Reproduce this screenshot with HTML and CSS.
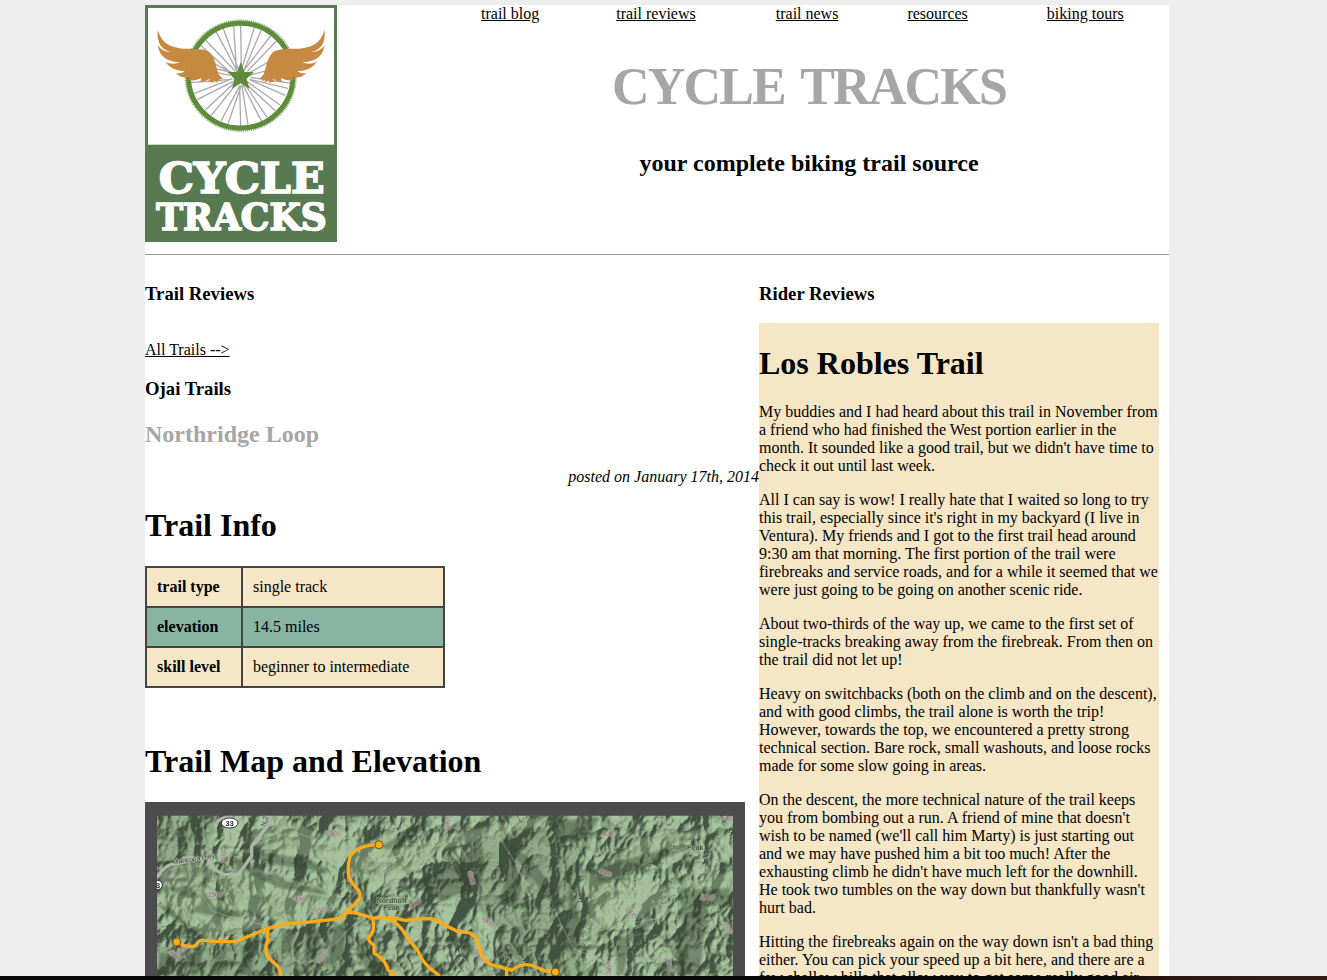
FILE: index.html
```html
<!DOCTYPE html>
<html lang="en">
<head>
<meta charset="utf-8">
<title>Cycle Tracks</title>
<link rel="stylesheet" href="styles.css">
</head>
<body>
<div class="wrapper">
<header class="masthead">
<svg class="logo" viewBox="15 15 576 711" aria-label="Cycle Tracks">
  <rect x="15" y="15" width="576" height="711" fill="#587a51"/>
  <rect x="24" y="24" width="558" height="408" fill="#fff"/>
  <rect x="24" y="432" width="558" height="3" fill="#c9d5c6"/>
  <g stroke="#aaa" stroke-width="4" fill="none">
    <path d="M290 220L281 78M304 200L302 76M306 204L343 82M312 210L364 90M309 215L392 108M322 214L410 122M322 222L430 160M330 226L454 190M296 210L247 78M290 210L228 95M286 214L197 121M276 222L183 137M280 220L160 160M272 216L150 190M270 226L150 200M276 238L150 248M278 236L163 280M280 244L172 299M288 244L196 330M292 248L214 346M300 256L243 363M304 256L264 371M299 260L302 378M306 256L324 375M306 248L365 365M310 246L381 352M312 246L407 333M320 244L420 315M330 240L436 286M328 238L444 265M330 232L456 250"/>
  </g>
  <circle cx="302" cy="227" r="166" fill="none" stroke="#91b078" stroke-width="6" stroke-dasharray="3.2 2.6"/>
  <circle cx="302" cy="227" r="157" fill="none" stroke="#5f8b3d" stroke-width="15"/>
  <path d="M302 187L314 216H342L320 236L328 266L302 250L276 266L283 236L262 216H291Z" fill="#5f8b3d"/>
  <g fill="#c68941">
    <path id="wing" d="M53 90C65 130 90 142 129 146C165 147 194 144 210 158C229 178 228 210 238 226Q244 235 254 238Q244 235 237 239L246 245L231 241L234 249L220 241L222 248Q208 244 201 247Q211 240 208 237Q190 247 177 247Q187 240 182 235Q158 247 141 238Q153 236 151 232Q122 236 108 220Q126 222 135 214Q96 213 76 186Q98 196 121 187Q61 186 53 136Q68 157 93 156Q48 146 53 90Z"/>
    <use href="#wing" transform="matrix(-1 0 0 1 607 0)"/>
  </g>
  <g class="logo-text">
    <text x="56" y="579" font-size="127" textLength="498" lengthAdjust="spacingAndGlyphs">CYCLE</text>
    <text x="49" y="689" font-size="111" textLength="511" lengthAdjust="spacingAndGlyphs">TRACKS</text>
  </g>
</svg>
<div class="banner">
  <nav class="nav"><a>trail blog</a><a>trail reviews</a><a>trail news</a><a>resources</a><a>biking tours</a></nav>
  <h1 class="title">CYCLE TRACKS</h1>
  <h2 class="tagline">your complete biking trail source</h2>
</div>
</header>
<main class="columns">
<section class="main-column">
  <h3 class="section-name">Trail Reviews</h3>
  <a class="all-trails">All Trails --&gt;</a>
  <h3 class="region">Ojai Trails</h3>
  <h2 class="trail-name">Northridge Loop</h2>
  <p class="posted">posted on January 17th, 2014</p>
  <h1 class="heading">Trail Info</h1>
  <table class="info">
    <tr><th>trail type</th><td>single track</td></tr>
    <tr class="alt"><th>elevation</th><td>14.5 miles</td></tr>
    <tr><th>skill level</th><td>beginner to intermediate</td></tr>
  </table>
  <h1 class="heading map-heading">Trail Map and Elevation</h1>
  <svg class="map" viewBox="15 21 1800 522">
    <defs>
      <filter id="relief" x="0" y="0" width="1" height="1" color-interpolation-filters="sRGB">
        <feTurbulence type="turbulence" baseFrequency="0.0065 0.005" numOctaves="4" seed="14"/>
        <feColorMatrix values="0 0 0 0 0  0 0 0 0 0  0 0 0 0 0  -1 0 0 0 1"/>
        <feGaussianBlur stdDeviation="1.5"/>
        <feDiffuseLighting surfaceScale="60" diffuseConstant="1" lighting-color="#fff"><feDistantLight azimuth="215" elevation="38"/></feDiffuseLighting>
        <feComponentTransfer>
          <feFuncR type="table" tableValues=".27 .34 .42 .49 .55 .61 .66"/>
          <feFuncG type="table" tableValues=".33 .41 .50 .58 .65 .72 .77"/>
          <feFuncB type="table" tableValues=".26 .33 .40 .46 .52 .58 .63"/>
        </feComponentTransfer>
      </filter>
      <filter id="soft"><feGaussianBlur stdDeviation="3"/></filter>
      <clipPath id="area"><rect x="51" y="62" width="1728" height="481"/></clipPath>
    </defs>
    <rect x="15" y="21" width="1800" height="522" fill="#4c4c4c"/>
    <g clip-path="url(#area)">
      <rect x="51" y="62" width="1728" height="481" fill="#8ba583" filter="url(#relief)"/>
      <g fill="#a3c197" opacity=".4" filter="url(#soft)">
        <path d="M345 90L440 75L630 150L615 200L430 170L330 150ZM60 220L190 190L190 290L350 365L390 395L190 430L60 320ZM220 240L350 220L600 300L600 350L400 380L260 320Z"/>
        <path d="M620 130L760 165L920 120L1170 70L1250 80L1040 130L880 170L810 230L720 270L630 240ZM1340 240L1500 130L1780 90L1600 155L1500 190L1400 280L1590 270L1780 230L1780 280L1600 300L1500 370L1350 420Z"/>
      </g>
      <g fill="#33432f" opacity=".42" filter="url(#soft)">
        <path d="M340 165L420 180L500 190L570 225L550 235L475 215L400 210L340 190ZM285 195L335 180L305 232L285 225ZM190 205L220 235L190 285L225 335L310 350L285 370L205 360L150 350L182 324ZM325 232L415 240L450 265L550 285L560 300L420 280ZM52 330L90 335L150 395L200 430L170 425L75 350ZM80 280L145 272L180 305L145 310Z"/>
        <path d="M720 155L815 100L855 65L865 90L820 130L745 164ZM810 270L910 220L980 180L1020 130L1038 210L1010 290L950 300L910 320ZM1080 120L1190 210L1280 340L1240 330L1150 220ZM1230 80L1380 65L1330 130L1250 145ZM1350 225L1470 190L1580 160L1690 145L1560 195L1460 240L1380 260ZM1620 285L1770 280L1770 320L1700 330L1680 540L1610 540L1610 430L1630 400ZM1434 440L1515 380L1560 370L1470 440L1450 540L1430 540Z"/>
        <path d="M60 470L110 480L90 540L55 540ZM150 480L190 465L175 540L140 540ZM225 475L265 460L245 540L215 540ZM310 455L345 440L335 540L300 540ZM425 410L470 400L450 470L425 480ZM500 410L545 395L530 490L490 500ZM580 400L620 375L610 480L565 510ZM650 430L700 430L730 530L690 540L650 480ZM800 430L870 480L930 540L880 540ZM920 420L990 430L1010 480L950 460ZM1110 180L1140 250L1130 340L1080 320ZM1290 250L1320 380L1300 500L1280 430Z"/>
      </g>
      <g fill="#3d4f39" opacity=".18" filter="url(#soft)"><path d="M51 62H235L205 150L110 195L51 210ZM51 455L380 425L620 385L640 543H51ZM1000 130L1380 70L1310 240L1340 543H1120L1060 400L990 300Z"/></g>
      <g fill="none" stroke="#aeb4ac" stroke-width="10"><path d="M51 248Q75 205 112 206L205 185L222 222L250 238L294 240L335 182V154L385 90L393 62"/><path d="M225 92Q240 62 278 64" stroke-width="8"/></g>
      <g fill="none" stroke="#b9c5b2" stroke-width="3" opacity=".45"><path d="M340 150L460 110L560 145L630 128M180 290L220 350L270 365L385 393M430 480L500 510L580 450L630 400M1080 130L1130 210L1170 310V430M1330 450L1360 410L1470 385L1560 370L1630 300M700 200L790 180L900 150M1250 360L1300 460L1390 500L1450 540"/></g>
      <g class="contours">
        <text x="560" y="120" transform="rotate(4 560 120)">2500</text><text x="204" y="305">2500</text><text x="455" y="316" transform="rotate(5 455 316)">-3000</text><text x="525" y="357" transform="rotate(-15 525 357)">3500</text><text x="255" y="205" transform="rotate(-88 255 205)">2500</text><text x="540" y="508" transform="rotate(-60 540 508)">3500</text><text x="85" y="475" transform="rotate(35 85 475)">2000</text><text x="117" y="474" transform="rotate(-25 117 474)">1500</text>
        <text x="915" y="64" transform="rotate(85 915 64)">3500</text><text x="635" y="262" transform="rotate(-86 635 262)">3500</text><text x="983" y="230" transform="rotate(75 983 230)">4000</text><text x="812" y="345" transform="rotate(-38 812 345)">4000</text><text x="1022" y="372" transform="rotate(36 1022 372)">4000</text><text x="998" y="472" transform="rotate(45 998 472)">3500</text>
        <text x="1385" y="124">4000'</text><text x="1373" y="232" transform="rotate(20 1373 232)">4500</text><text x="1452" y="342" transform="rotate(43 1452 342)">3000</text><text x="1680" y="314">4500'</text><text x="1745" y="387" transform="rotate(48 1745 387)">4500</text><text x="1397" y="498" transform="rotate(88 1397 498)">2500</text><text x="1577" y="490" transform="rotate(78 1577 490)">3500</text><text x="1740" y="75">5000</text>
      </g>
      <g class="places"><text x="710" y="323" textLength="90">Nordhoff</text><text x="730" y="345">Peak</text><text x="1583" y="165">Chief Peak</text></g>
      <g class="roads"><text x="100" y="208" transform="rotate(-9 100 208)">Maricopa Hwy</text><text x="376" y="95" transform="rotate(-75 376 95)">N 24</text></g>
      <g fill="#fff" stroke="#333" stroke-width="3"><ellipse cx="269" cy="84" rx="25" ry="15"/><ellipse cx="51" cy="270" rx="16" ry="14"/></g>
      <g class="shield"><text x="269" y="92" text-anchor="middle">33</text><text x="48" y="278">3</text></g>
      <g fill="none" stroke="#fdab19" stroke-width="10" stroke-linejoin="round">
        <path d="M110 441L135 453L158 455Q166 454 174 442Q180 434 194 436L230 440L290 439L384 400L440 386L500 382L600 371Q613 365 620 350L650 323Q667 303 655 285L635 262Q616 235 630 185Q650 150 717 149"/>
        <path d="M384 400L382 440Q368 475 398 500Q426 520 421 543M614 353L640 352L695 368L770 370L798 377Q858 366 885 375L950 408L985 413Q1008 418 1016 450Q1025 510 1080 515L1115 526Q1150 498 1188 516L1215 528H1246"/>
        <path d="M698 370Q708 405 685 430Q688 442 702 450V475Q735 490 744 525L770 543M735 370Q775 376 803 430L833 466Q842 495 870 520L900 543M1100 522V543"/>
      </g>
      <g fill="#fbac18" stroke="#6d541b" stroke-width="3"><circle cx="110" cy="441" r="12"/><circle cx="717" cy="149" r="12"/><circle cx="1246" cy="531" r="12"/></g>
    </g>
  </svg>
</section>
<aside class="side-column">
  <h3 class="section-name">Rider Reviews</h3>
  <article class="review">
    <h1 class="review-title">Los Robles Trail</h1>
    <p>My buddies and I had heard about this trail in November from<br>a friend who had finished the West portion earlier in the<br>month. It sounded like a good trail, but we didn't have time to<br>check it out until last week.</p>
    <p>All I can say is wow! I really hate that I waited so long to try<br>this trail, especially since it's right in my backyard (I live in<br>Ventura). My friends and I got to the first trail head around<br>9:30 am that morning. The first portion of the trail were<br>firebreaks and service roads, and for a while it seemed that we<br>were just going to be going on another scenic ride.</p>
    <p>About two-thirds of the way up, we came to the first set of<br>single-tracks breaking away from the firebreak. From then on<br>the trail did not let up!</p>
    <p>Heavy on switchbacks (both on the climb and on the descent),<br>and with good climbs, the trail alone is worth the trip!<br>However, towards the top, we encountered a pretty strong<br>technical section. Bare rock, small washouts, and loose rocks<br>made for some slow going in areas.</p>
    <p>On the descent, the more technical nature of the trail keeps<br>you from bombing out a run. A friend of mine that doesn't<br>wish to be named (we'll call him Marty) is just starting out<br>and we may have pushed him a bit too much! After the<br>exhausting climb he didn't have much left for the downhill.<br>He took two tumbles on the way down but thankfully wasn't<br>hurt bad.</p>
    <p>Hitting the firebreaks again on the way down isn't a bad thing<br>either. You can pick your speed up a bit here, and there are a<br>few shallow hills that allow you to get some really good air.</p>
  </article>
</aside>
</main>
</div>
<div class="dock-edge"></div>
</body>
</html>
```
FILE: styles.css
```css
html, body { height: 980px; overflow: hidden; }
body { margin: 0; background: #eee; color: #000; font: 16px/18px "Liberation Serif", serif; }
h1, h2, h3, p { margin: 0; white-space: nowrap; }
a { text-decoration: underline; }
.wrapper { width: 1024px; height: 971px; margin: 5px 0 0 145px; background: #fff; overflow: hidden; }
.masthead { display: flex; height: 249px; border-bottom: 1px solid #999; }
.logo { width: 192px; height: 237px; flex: none; }
.logo-text { font-family: "DejaVu Serif", serif; font-weight: bold; fill: #fff; stroke: #fff; stroke-width: 5; }
.banner { flex: 1; padding-left: 112px; }
.nav { display: flex; padding-left: 32px; }
.nav a + a { margin-left: 77px; }
.nav a:nth-child(3) { margin-left: 80px; }
.nav a:nth-child(4) { margin-left: 69px; }
.nav a:nth-child(5) { margin-left: 79px; }
.title { margin-top: 34px; font-size: 52px; letter-spacing: -1.8px; word-spacing: 5px; line-height: 60px; color: #a6a6a6; text-align: center; }
.tagline { margin-top: 32px; font-size: 24px; line-height: 28px; text-align: center; }
.columns { display: flex; }
.main-column { width: 614px; flex: none; }
.side-column { width: 400px; flex: none; }
.section-name { margin-top: 28px; font-size: 18.72px; line-height: 22px; }
.all-trails { display: block; width: fit-content; margin-top: 36px; }
.region { margin-top: 19px; font-size: 18.72px; line-height: 22px; }
.trail-name { margin-top: 20px; font-size: 24px; line-height: 28px; color: #a6a6a6; }
.posted { margin-top: 20px; text-align: right; font-style: italic; }
.heading { margin-top: 21px; font-size: 32px; line-height: 37px; }
.info { width: 300px; height: 122px; margin-top: 22px; border-collapse: collapse; border: 2px solid #444; background: #f5e6c6; }
.info th, .info td { padding: 0 10px; border: 2px solid #444; text-align: left; height: 38px; }
.info th { width: 74px; }
.info .alt { background: #88b4a3; }
.map-heading { margin-top: 55px; }
.map { display: block; width: 600px; height: 174px; margin-top: 22px; }
.map text { font-family: "Liberation Sans", sans-serif; }
.contours { font-size: 19px; fill: #795f66; stroke: #c4b9b2; stroke-width: 4; paint-order: stroke; opacity: .75; }
.places { font-size: 21px; font-weight: bold; fill: #42573f; stroke: #a3bc99; stroke-width: 3; paint-order: stroke; }
.roads { font-size: 20px; fill: #333; stroke: #b7c5b0; stroke-width: 3; paint-order: stroke; }
.shield { font-size: 22px; font-weight: bold; fill: #222; }
.review { margin-top: 18px; padding-top: 22px; height: 700px; background: #f5e6c6; }
.review-title { font-size: 32px; line-height: 37px; margin-bottom: 21px; }
.review p { margin-bottom: 16px; }
.dock-edge { height: 4px; background: linear-gradient(90deg, #090909 0 83%, #2c1711 88%, #351d14); }
```
